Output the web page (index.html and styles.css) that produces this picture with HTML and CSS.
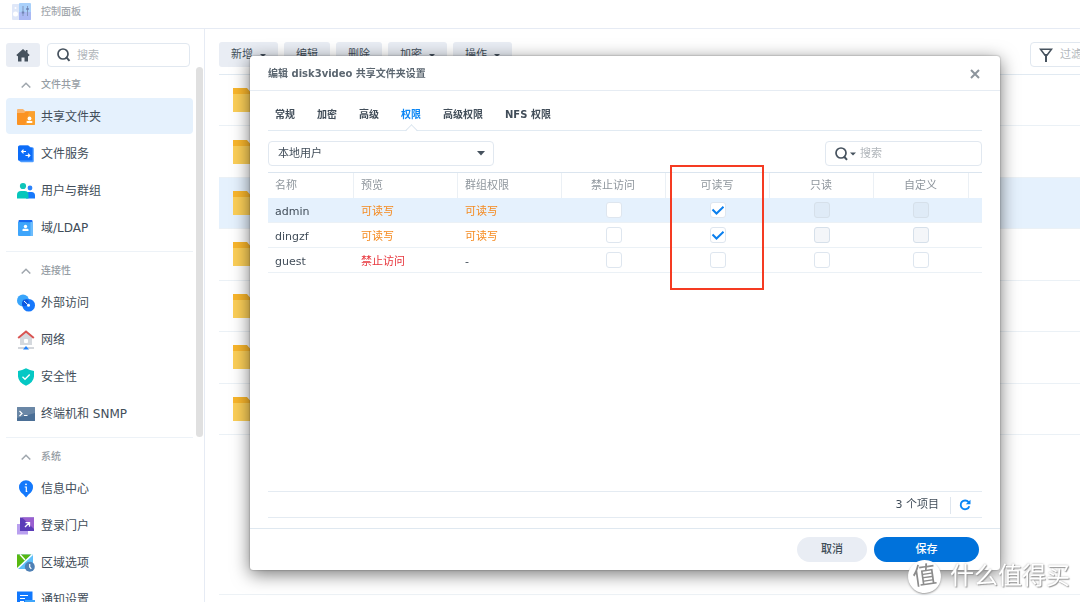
FILE: index.html
```html
<!DOCTYPE html>
<html lang="zh-CN">
<head>
<meta charset="utf-8">
<title>控制面板</title>
<link rel="stylesheet" href="styles.css">
</head>
<body>
<div class="app">
  <header class="titlebar">
    <svg class="app-icon" width="20" height="18" viewBox="0 0 20 18" aria-hidden="true">
      <rect x="0" y="1" width="9" height="16" rx="1" fill="#dfe7f8"/>
      <rect x="7" y="0" width="12" height="17" rx="1" fill="#a9d0fa"/>
      <path d="M7 9h12v7a1 1 0 0 1-1 1H7z" fill="#aab9f4"/>
      <path d="M11 3v10M15.500 3v10" stroke="#8295bd" stroke-width="1"/>
      <path d="M9.800 9.500h2.400M14.300 6h2.400" stroke="#6f84b4" stroke-width="2"/>
      <circle cx="3.500" cy="11" r="2.500" fill="#fff"/><circle cx="3.500" cy="5" r="1" fill="#fff"/>
    </svg>
    <h1 class="app-title">控制面板</h1>
  </header>
  <div class="workspace">
    <aside class="sidebar">
      <div class="side-tools">
        <button class="home" aria-label="主页">
          <svg width="14" height="13" viewBox="0 0 14 13"><path d="M7 0 0.300 6 1.500 7.300 2 6.900V12.500H5.500V8.500H8.500V12.500H12V6.900L12.500 7.300 13.700 6 11.500 4V1H9.800V2.500z" fill="#46525e"/></svg>
        </button>
        <label class="field side-search">
          <svg width="14" height="14" viewBox="0 0 14 14" aria-hidden="true"><circle cx="6" cy="6" r="5" fill="none" stroke="#46525e" stroke-width="1.700"/><path d="M9.200 9.200 12.500 12.900" stroke="#46525e" stroke-width="2"/></svg>
          <input type="search" placeholder="搜索" aria-label="搜索设置">
        </label>
      </div>
      <nav class="nav">
        <section class="group">
          <h2 class="group-title"><svg class="chev" width="10" height="6" viewBox="0 0 10 6"><path d="M.700 5.500 5 1.200 9.300 5.500"/></svg>文件共享</h2>
          <ul class="items">
            <li><a class="item current" href="#">
              <svg width="18" height="18" viewBox="0 0 18 18"><path d="M0 2a1 1 0 0 1 1-1h5l2 2h9a1 1 0 0 1 1 1v3H0z" fill="#f9b56e"/><path d="M0 5h7l2-1.500h9V16a1 1 0 0 1-1 1H1a1 1 0 0 1-1-1z" fill="#fb9323"/><path d="M12 3.500h6V16a1 1 0 0 1-1 1H8z" fill="#fcaa36" opacity=".6"/><circle cx="12.500" cy="10.500" r="1.900" fill="#fff"/><rect x="9.500" y="13" width="6" height="2" rx="1" fill="#fff"/></svg>共享文件夹</a></li>
            <li><a class="item" href="#">
              <svg width="18" height="18" viewBox="0 0 18 18"><path d="M1 2a1.500 1.500 0 0 1 1.500-1.500h9L14 2.500h1.500a1.300 1.300 0 0 1 1.300 1.300V16a1.300 1.300 0 0 1-1.300 1.300H4L1 15z" fill="#4c9bff"/><path d="M1 2.500A2 2 0 0 1 3 .500h8L13 2.500h2.500V15.500H2.500A1.500 1.500 0 0 1 1 14z" fill="#0c6cf8"/><path d="M9 6.500H4.800M6.500 4.700 4.700 6.500 6.500 8.300M8.500 10.500h4.200M11 8.700 12.800 10.500 11 12.300" fill="none" stroke="#fff" stroke-width="1.200"/></svg>文件服务</a></li>
            <li><a class="item" href="#">
              <svg width="18" height="18" viewBox="0 0 18 18"><circle cx="13" cy="6" r="2.400" fill="#2c83fa"/><path d="M9 16.500V13a3 3 0 0 1 3-3h2.500a3.500 3.500 0 0 1 3.500 3.500v3z" fill="#1778fc"/><circle cx="6" cy="4" r="3.100" fill="#0fc5b9"/><path d="M0 16.500V13a4 4 0 0 1 4-4h3.500a4 4 0 0 1 4 4v3.500z" fill="#06c6bb"/></svg>用户与群组</a></li>
            <li><a class="item" href="#">
              <svg width="18" height="18" viewBox="0 0 18 18"><rect x="1.500" y="1" width="14" height="5" rx="1" fill="#1768f0"/><path d="M1 3l14 .200 1-.700V16a1 1 0 0 1-1 1H2a1 1 0 0 1-1-1z" fill="#3ea5fb"/><path d="M13.500 3h2.500v14h-2.500z" fill="#6dbcfc"/><circle cx="8.500" cy="7.500" r="1.700" fill="#fff"/><path d="M5.500 12v-1.200q0-1 1-1h4q1 0 1 1V12z" fill="#fff"/></svg>域/LDAP</a></li>
          </ul>
        </section>
        <section class="group">
          <h2 class="group-title"><svg class="chev" width="10" height="6" viewBox="0 0 10 6"><path d="M.700 5.500 5 1.200 9.300 5.500"/></svg>连接性</h2>
          <ul class="items">
            <li><a class="item" href="#">
              <svg width="18" height="18" viewBox="0 0 18 18"><circle cx="6" cy="6.500" r="6" fill="#39a5fb"/><circle cx="11.700" cy="11.200" r="6.300" fill="#1678fc"/><path d="M6.500 5.800a6.300 6.300 0 0 0-1 6.500 6 6 0 0 0 6.400-4.500 6.300 6.300 0 0 0-2-2.500z" fill="#0a56e0"/><path d="M7 7l3.500 3.300" stroke="#fff" stroke-width="1"/><circle cx="11.500" cy="11.200" r="1.500" fill="#fff"/></svg>外部访问</a></li>
            <li><a class="item" href="#">
              <svg width="18" height="20" viewBox="0 0 18 20"><path d="M3 7.500 9 2.500l6 5V15H3z" fill="#d5d9de"/><rect x="7" y="9" width="4" height="4" rx="1" fill="#fff"/><path d="M1.200 8 9 1.500 16.800 8" fill="none" stroke="#d95452" stroke-width="2"/><path d="M1 18h16" stroke="#c5c9cf" stroke-width="1.500"/><path d="M9 16l3 3.500H6z" fill="#2383fb"/></svg>网络</a></li>
            <li><a class="item" href="#">
              <svg width="18" height="18" viewBox="0 0 18 18"><path d="M9 .300Q13 2.600 17 3V8.500Q16.500 14.500 9 17.700 1.500 14.500 1 8.500V3Q5 2.600 9 .300z" fill="#05c8c4"/><path d="M5.500 8.700 8 11.200 12.700 6.400" fill="none" stroke="#fff" stroke-width="1.400"/></svg>安全性</a></li>
            <li><a class="item" href="#">
              <svg width="18" height="18" viewBox="0 0 18 18"><rect y="2" width="18" height="14" rx=".500" fill="#4b6f96"/><path d="M0 2h18v6L0 13z" fill="#7891ad" opacity=".7"/><path d="M2.500 6l2.500 2.500L2.500 11M7 10.500h3.500" fill="none" stroke="#fff" stroke-width="1.200"/></svg>终端机和 SNMP</a></li>
          </ul>
        </section>
        <section class="group">
          <h2 class="group-title"><svg class="chev" width="10" height="6" viewBox="0 0 10 6"><path d="M.700 5.500 5 1.200 9.300 5.500"/></svg>系统</h2>
          <ul class="items">
            <li><a class="item" href="#">
              <svg width="18" height="18" viewBox="0 0 18 18"><path d="M9 .300a7 7 0 0 1 7 7q0 4.200-4.200 7L9 17.500 6.200 14.300Q2 11.500 2 7.300a7 7 0 0 1 7-7z" fill="#1479fc"/><circle cx="9" cy="4.300" r=".9" fill="#fff"/><path d="M7.700 7H9.300v5M9.300 11.500h1" fill="none" stroke="#fff" stroke-width="1.200"/></svg>信息中心</a></li>
            <li><a class="item" href="#">
              <svg width="18" height="18" viewBox="0 0 18 18"><rect y="7" width="11" height="10.500" fill="#b9a0ef"/><rect x="3" y=".500" width="14" height="13.500" fill="#5b3cb8"/><path d="M5 .500h12V12z" fill="#9a5fd0"/><path d="M8 10l4-4M8.500 5.700h4v4" fill="none" stroke="#fff" stroke-width="1.300"/></svg>登录门户</a></li>
            <li><a class="item" href="#">
              <svg width="18" height="18" viewBox="0 0 18 18"><path d="M0 .500h16V15H0z" fill="#5fc0fb"/><path d="M0 .500h14L0 14.500z" fill="#58b811"/><path d="M0 15 15.500 .500M3 .500 8 6" stroke="#fff" stroke-width="1.400"/><circle cx="12.800" cy="12.800" r="5" fill="#4f80b5"/><path d="M12.700 10v3l1.600 1.800" fill="none" stroke="#fff" stroke-width="1.200"/></svg>区域选项</a></li>
            <li><a class="item" href="#">
              <svg width="18" height="18" viewBox="0 0 18 18"><path d="M0 .500h15.500V17H0z" fill="#1178fd"/><rect x="8" y="9" width="10" height="8" fill="#3ea5fb"/><path d="M3 4.500h8M3 7.500h5M3 10.500h4" stroke="#fff" stroke-width="1.200"/></svg>通知设置</a></li>
          </ul>
        </section>
        <div class="scrollbar"></div>
      </nav>
    </aside>
    <main class="content">
      <div class="toolbar">
        <button class="tool">新增<i class="caret"></i></button>
        <button class="tool">编辑</button>
        <button class="tool">删除</button>
        <button class="tool">加密<i class="caret"></i></button>
        <button class="tool">操作<i class="caret"></i></button>
        <label class="field filter">
          <svg width="14" height="14" viewBox="0 0 14 14" aria-hidden="true"><path d="M1.500 1.200h11L8 7.200H6z" fill="none" stroke="#46525e" stroke-width="1.600"/><path d="M7 6v8" stroke="#46525e" stroke-width="2"/></svg>
          <input type="search" placeholder="过滤器" aria-label="过滤器">
        </label>
      </div>
      <ul class="folders">
        <li class="folder"><svg width="30" height="26" viewBox="0 0 30 26"><path d="M0 1h14l3 3.500h13V12H0z" fill="#f9b62c"/><path d="M0 7h30v18H0z" fill="#fccf58"/></svg></li>
        <li class="folder"><svg width="30" height="26" viewBox="0 0 30 26"><path d="M0 1h14l3 3.500h13V12H0z" fill="#f9b62c"/><path d="M0 7h30v18H0z" fill="#fccf58"/></svg></li>
        <li class="folder chosen"><svg width="30" height="26" viewBox="0 0 30 26"><path d="M0 1h14l3 3.500h13V12H0z" fill="#f9b62c"/><path d="M0 7h30v18H0z" fill="#fccf58"/></svg></li>
        <li class="folder"><svg width="30" height="26" viewBox="0 0 30 26"><path d="M0 1h14l3 3.500h13V12H0z" fill="#f9b62c"/><path d="M0 7h30v18H0z" fill="#fccf58"/></svg></li>
        <li class="folder"><svg width="30" height="26" viewBox="0 0 30 26"><path d="M0 1h14l3 3.500h13V12H0z" fill="#f9b62c"/><path d="M0 7h30v18H0z" fill="#fccf58"/></svg></li>
        <li class="folder"><svg width="30" height="26" viewBox="0 0 30 26"><path d="M0 1h14l3 3.500h13V12H0z" fill="#f9b62c"/><path d="M0 7h30v18H0z" fill="#fccf58"/></svg></li>
        <li class="folder"><svg width="30" height="26" viewBox="0 0 30 26"><path d="M0 1h14l3 3.500h13V12H0z" fill="#f9b62c"/><path d="M0 7h30v18H0z" fill="#fccf58"/></svg></li>
      </ul>
      <div class="content-foot"></div>
    </main>
  </div>
</div>

<div class="dialog" role="dialog" aria-labelledby="dlg-title">
  <header class="dialog-head">
    <h2 class="dialog-title" id="dlg-title">编辑 disk3video 共享文件夹设置</h2>
    <button class="close" aria-label="关闭"><svg width="10" height="10" viewBox="0 0 10 10"><path d="M1 1l8 8M9 1 1 9" stroke="#8d959d" stroke-width="2"/></svg></button>
  </header>
  <div class="dialog-body">
    <div class="tabs" role="tablist">
      <button class="tab" role="tab">常规</button>
      <button class="tab" role="tab">加密</button>
      <button class="tab" role="tab">高级</button>
      <button class="tab active" role="tab" aria-selected="true">权限</button>
      <button class="tab" role="tab">高级权限</button>
      <button class="tab" role="tab">NFS 权限</button>
    </div>
    <div class="filters">
      <select class="scope" aria-label="用户类型"><option>本地用户</option></select>
      <label class="field dialog-search">
        <svg width="21" height="14" viewBox="0 0 21 14" aria-hidden="true"><circle cx="6" cy="6" r="5" fill="none" stroke="#46525e" stroke-width="1.700"/><path d="M9 9.500 12 12.900" stroke="#46525e" stroke-width="2"/><path d="M15 5.500h6l-3 3z" fill="#46525e"/></svg>
        <input type="search" placeholder="搜索" aria-label="搜索用户">
      </label>
    </div>
    <table class="perms">
      <colgroup><col class="c-name"><col class="c-std"><col class="c-std"><col class="c-std"><col class="c-std"><col class="c-std"><col class="c-custom"><col></colgroup>
      <thead><tr><th>名称</th><th>预览</th><th>群组权限</th><th class="mid">禁止访问</th><th class="mid">可读写</th><th class="mid">只读</th><th class="mid">自定义</th><th></th></tr></thead>
      <tbody>
        <tr class="chosen"><td>admin</td><td class="warn">可读写</td><td class="warn">可读写</td>
          <td class="mid"><input class="box" type="checkbox" aria-label="admin 禁止访问"></td>
          <td class="mid"><input class="box" type="checkbox" checked aria-label="admin 可读写"></td>
          <td class="mid"><input class="box" type="checkbox" disabled aria-label="admin 只读"></td>
          <td class="mid"><input class="box" type="checkbox" disabled aria-label="admin 自定义"></td><td></td></tr>
        <tr><td>dingzf</td><td class="warn">可读写</td><td class="warn">可读写</td>
          <td class="mid"><input class="box" type="checkbox" aria-label="dingzf 禁止访问"></td>
          <td class="mid"><input class="box" type="checkbox" checked aria-label="dingzf 可读写"></td>
          <td class="mid"><input class="box" type="checkbox" disabled aria-label="dingzf 只读"></td>
          <td class="mid"><input class="box" type="checkbox" disabled aria-label="dingzf 自定义"></td><td></td></tr>
        <tr><td>guest</td><td class="deny">禁止访问</td><td>-</td>
          <td class="mid"><input class="box" type="checkbox" aria-label="guest 禁止访问"></td>
          <td class="mid"><input class="box" type="checkbox" aria-label="guest 可读写"></td>
          <td class="mid"><input class="box" type="checkbox" aria-label="guest 只读"></td>
          <td class="mid"><input class="box" type="checkbox" aria-label="guest 自定义"></td><td></td></tr>
      </tbody>
    </table>
    <div class="status">
      <span class="count">3 个项目</span>
      <button class="refresh" aria-label="刷新"><svg width="12" height="12" viewBox="0 0 12 12"><path d="M9.600 3.200A4.400 4.400 0 1 0 10.300 7.200" fill="none" stroke="#0a86f5" stroke-width="1.900"/><path d="M11.500.700V5.300H6.800z" fill="#0a86f5"/></svg></button>
    </div>
  </div>
  <footer class="dialog-foot">
    <button class="btn cancel">取消</button>
    <button class="btn save">保存</button>
  </footer>
  <div class="highlight"></div>
</div>

<div class="watermark"><span class="seal">值</span><span>什么值得买</span></div>
</body>
</html>
```
FILE: styles.css
```css
* { box-sizing: border-box; }

body {
  margin: 0;
  height: 100vh;
  overflow: hidden;
  background: #fff;
  color: #414d59;
  font: 11px/16px "DejaVu Sans", "Noto Sans CJK SC", sans-serif;
}

h1, h2, ul { margin: 0; padding: 0; }
ul { list-style: none; }
svg { display: block; flex: none; }
button, input, select { font: inherit; color: inherit; border: 0; padding: 0; margin: 0; background: none; }
a { color: inherit; text-decoration: none; }

.app { display: flex; flex-direction: column; height: 100vh; }

.titlebar {
  display: flex;
  align-items: center;
  gap: 9px;
  height: 29px;
  padding: 0 12px 5px;
  border-bottom: 1px solid #e6ebf4;
}
.app-title { font-size: 10px; font-weight: 500; color: #a2a7ad; }

.workspace { display: flex; flex: 1; min-height: 0; }

/* Sidebar */
.sidebar {
  display: flex;
  flex-direction: column;
  width: 205px;
  flex: none;
  padding-top: 14px;
  border-right: 1px solid #e6ebf4;
}
.side-tools { display: flex; gap: 7px; padding: 0 14px 0 6px; }
.home {
  display: grid;
  place-items: center;
  flex: none;
  width: 34px;
  height: 24px;
  border-radius: 3px;
  background: #e9edf4;
}
.field {
  display: flex;
  align-items: center;
  height: 25px;
  border: 1px solid #e1e8f0;
  border-radius: 4px;
  background: #fff;
}
.field input { flex: 1; width: 100%; min-width: 0; padding-top: 1px; outline: 0; }
.field input::placeholder { color: #b1b6bb; opacity: 1; }
.side-search { flex: 1; min-width: 0; gap: 6px; height: 24px; padding: 0 9px; }

.nav { position: relative; flex: 1; min-height: 0; overflow: hidden; padding: 0 11px 0 6px; }
.group { padding: 5px 0 6px; border-bottom: 1px solid #edf2f7; }
.group:first-child { padding-top: 4px; }
.group-title {
  display: flex;
  align-items: center;
  gap: 10px;
  height: 27px;
  padding-left: 15px;
  font-size: 10px;
  font-weight: 500;
  color: #969da4;
}
.chev path { fill: none; stroke: #a0a7ae; stroke-width: 1.5; }
.items { display: flex; flex-direction: column; gap: 1px; }
.item {
  display: flex;
  align-items: center;
  gap: 6px;
  height: 36px;
  padding: 2px 0 0 11px;
  border-radius: 4px;
  font-size: 12px;
}
.item.current { background: #e5f1fd; }
.scrollbar {
  position: absolute;
  top: 0;
  right: 1px;
  width: 7px;
  height: 370px;
  border-radius: 4px;
  background: #e0e0e0;
}

/* Folder list */
.content { display: flex; flex-direction: column; flex: 1; min-width: 0; overflow: hidden; padding: 13px 0 7px 14px; }
.toolbar { display: flex; gap: 6px; }
.tool {
  display: flex;
  align-items: center;
  gap: 7px;
  height: 25px;
  padding: 1px 12px 0;
  border-radius: 3px;
  background: #e9edf4;
}
.caret { border: 3px solid transparent; border-top-color: #46525e; border-bottom: 0; }
.filter { flex: none; width: 120px; margin: 0 -70px 0 auto; padding: 0 8px; gap: 7px; }
.folders { display: flex; flex-direction: column; height: 361px; margin-top: 7px; border-top: 1px solid #e1eaf2; }
.folder { display: flex; align-items: center; flex: 1; padding-left: 14px; border-bottom: 1px solid #ebf1f6; }
.folder.chosen { background: #e5f1fd; }
.content-foot { margin-top: auto; border-top: 1px solid #edf2f6; }

/* Dialog */
.dialog {
  position: fixed;
  inset: 56px 80px 32px 250px;
  display: flex;
  flex-direction: column;
  border-radius: 3px;
  background: #fff;
  box-shadow: 0 4px 18px rgba(0, 0, 0, .55), 0 0 2px rgba(0, 0, 0, .4);
}
.dialog-head {
  display: flex;
  align-items: center;
  justify-content: space-between;
  height: 35px;
  padding: 1px 20px 0 18px;
  border-bottom: 1px solid #e6ecf3;
}
.dialog-title { font-size: 10px; font-weight: 700; color: #5b6670; }
.dialog-body { display: flex; flex-direction: column; flex: 1; min-height: 0; padding: 7px 18px 10px; }
.tabs { display: flex; gap: 22px; height: 33px; padding: 0 7px; border-bottom: 1px solid #e1eaf2; }
.tab { position: relative; padding-top: 1px; font-size: 10px; font-weight: 700; }
.tab.active { color: #0a86f5; }
.tab.active::after {
  content: "";
  position: absolute;
  left: 50%;
  bottom: -5px;
  width: 8px;
  height: 8px;
  margin-left: -4px;
  border: solid #dbe5ef;
  border-width: 1px 0 0 1px;
  background: linear-gradient(135deg, #fff 50%, transparent 50%);
  transform: rotate(45deg);
}
.filters { display: flex; justify-content: space-between; margin: 10px 0 6px; }
.scope {
  appearance: none;
  width: 226px;
  height: 25px;
  padding: 1px 0 0 9px;
  border: 1px solid #e1e8f0;
  border-radius: 4px;
  background: url("data:image/svg+xml,%3Csvg xmlns='http://www.w3.org/2000/svg' width='8' height='5'%3E%3Cpath d='M0 0h8L4 4.500z' fill='%2346525e'/%3E%3C/svg%3E") no-repeat right 8px center;
}
.dialog-search { width: 157px; gap: 4px; padding: 0 9px; }

.perms { width: 100%; table-layout: fixed; border-collapse: separate; border-spacing: 0; border-top: 1px solid #dbe5ef; }
.c-name { width: 86px; }
.c-std { width: 104px; }
.c-custom { width: 95px; }
.perms th {
  height: 25px;
  padding: 0 7px;
  border-right: 1px solid #ebf0f5;
  text-align: left;
  font-weight: 400;
  color: #8f969d;
}
.perms th:last-child { border-right: 0; }
.perms td { height: 25px; padding: 3px 7px 0; border-bottom: 1px solid #ebf1f6; }
.perms .mid { padding: 0 8px 0 7px; text-align: center; }
.perms .chosen td { background: #e5f1fd; }
.perms .warn { color: #f58a1f; }
.perms .deny { color: #e8353c; }
.box {
  appearance: none;
  display: block;
  width: 16px;
  height: 16px;
  margin: 0 auto;
  border: 1px solid #dee6ef;
  border-radius: 3px;
  background: #fff;
}
.box:disabled { background: rgba(205, 215, 228, .22); border-color: #d6e0ea; }
.box:checked {
  background: #fff url("data:image/svg+xml,%3Csvg xmlns='http://www.w3.org/2000/svg' width='14' height='14'%3E%3Cpath d='M1.500 6.500 5.500 10.500 12.500 3.800' fill='none' stroke='%230a7fee' stroke-width='2'/%3E%3C/svg%3E") center no-repeat;
}

.status {
  display: flex;
  align-items: center;
  justify-content: flex-end;
  gap: 11px;
  height: 27px;
  padding-top: 1px;
  margin-top: auto;
  border: solid #e4ebf2;
  border-width: 1px 0;
}
.refresh { height: 17px; padding: 0 11px 0 8px; border-left: 1px solid #dfe6ee; }

.dialog-foot {
  display: flex;
  justify-content: flex-end;
  gap: 7px;
  padding: 8px 21px;
  border-top: 1px solid #dfe8f0;
}
.btn { height: 25px; border-radius: 13px; font-weight: 500; }
.cancel { width: 70px; background: #e9edf4; }
.save { width: 105px; background: #0072db; color: #fff; }

.highlight {
  position: absolute;
  top: 109px;
  left: 420px;
  width: 94px;
  height: 125px;
  border: 2px solid #f53b22;
  pointer-events: none;
}

.watermark {
  position: fixed;
  right: 10px;
  bottom: 9px;
  display: flex;
  align-items: center;
  gap: 9px;
  color: #fff;
  font-size: 24px;
  line-height: 34px;
  text-shadow: 1px 1px 1px #999, 0 0 2px #aaa;
  pointer-events: none;
}
.seal {
  width: 33px;
  height: 33px;
  border-radius: 50%;
  background: #fff;
  box-shadow: 0 1px 2px #999;
  color: #8c8c8c;
  text-align: center;
  line-height: 32px;
  text-shadow: none;
  transform: rotate(-8deg);
}
```
